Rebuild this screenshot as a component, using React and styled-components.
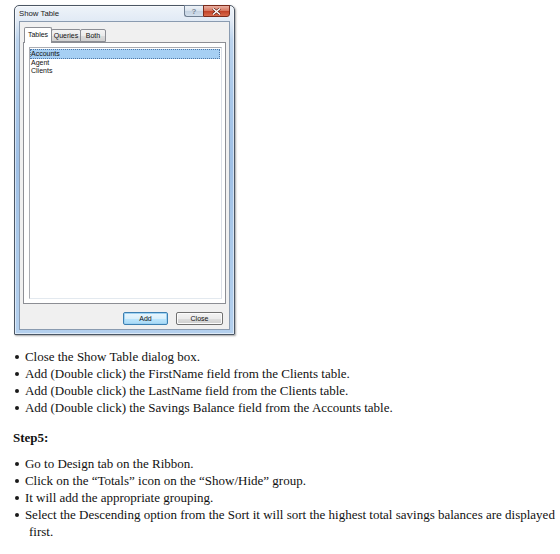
import React from 'react';
import styled, { createGlobalStyle } from 'styled-components';

const GlobalStyle = createGlobalStyle`
  html, body {
    margin: 0;
    padding: 0;
    background: #ffffff;
  }
  body {
    width: 560px;
    height: 554px;
    overflow: hidden;
    font-family: 'Liberation Serif', 'Times New Roman', serif;
    color: #111;
  }
`;

const tables = ['Accounts', 'Agent', 'Clients'];

const tabs = [
  { label: 'Tables', width: 28 },
  { label: 'Queries', width: 30 },
  { label: 'Both', width: 26 },
];

const firstSteps = [
  'Close the Show Table dialog box.',
  'Add (Double click) the FirstName field from the Clients table.',
  'Add (Double click) the LastName field from the Clients table.',
  'Add (Double click) the Savings Balance field from the Accounts table.',
];

const stepFive = [
  'Go to Design tab on the Ribbon.',
  'Click on the \u201cTotals\u201d icon on the \u201cShow/Hide\u201d group.',
  'It will add the appropriate grouping.',
  'Select the Descending option from the Sort it will sort the highest total savings balances are displayed first.',
];

export default function App() {
  return (
    <>
      <GlobalStyle />
      <Page>
        <Dialog>
          <TitleBar>
            <Title>Show Table</Title>
            <CaptionButtons>
              <HelpButton>?</HelpButton>
              <CloseCaption>
                <svg width="9" height="7" viewBox="0 0 9 7">
                  <path
                    d="M1 0.5 L8 6.5 M8 0.5 L1 6.5"
                    stroke="#5a1a10"
                    strokeWidth="2.6"
                  />
                  <path
                    d="M1 0.5 L8 6.5 M8 0.5 L1 6.5"
                    stroke="#ffffff"
                    strokeWidth="1.4"
                  />
                </svg>
              </CloseCaption>
            </CaptionButtons>
          </TitleBar>
          <Client>
            <TabRow>
              {tabs.map((t, i) => (
                <Tab key={t.label} $active={i === 0} $width={t.width}>
                  {t.label}
                </Tab>
              ))}
            </TabRow>
            <TabPanel>
              <ListBox>
                {tables.map((name, i) => (
                  <ListRow key={name} $selected={i === 0}>
                    {name}
                  </ListRow>
                ))}
              </ListBox>
            </TabPanel>
            <ButtonRow>
              <PushButton $default>Add</PushButton>
              <PushButton>Close</PushButton>
            </ButtonRow>
          </Client>
        </Dialog>

        <Steps $top={12.5}>
          {firstSteps.map((s) => (
            <Step key={s}>
              <Bullet />
              {s}
            </Step>
          ))}
        </Steps>

        <StepHeading>Step5:</StepHeading>

        <Steps $top={9}>
          {stepFive.map((s) => (
            <Step key={s}>
              <Bullet />
              {s}
            </Step>
          ))}
        </Steps>
      </Page>
    </>
  );
}

const Page = styled.div`
  padding: 5px 0 0 13px;
`;

const Dialog = styled.div`
  box-sizing: border-box;
  width: 221px;
  height: 330px;
  margin-left: 1px;
  padding: 0 4px 4px 4px;
  display: flex;
  flex-direction: column;
  border: 1px solid #4b5664;
  border-radius: 5px 5px 1px 1px;
  background: linear-gradient(
    180deg,
    #eef3f9 0px,
    #e1eaf5 15px,
    #bcd4ee 34px,
    #a9c8ea 90px,
    #9fc0e6 160px,
    #aac9ea 230px,
    #b4d0ee 100%
  );
  box-shadow: inset 0 0 0 1px rgba(255, 255, 255, 0.55),
    1px 1px 2px rgba(0, 0, 0, 0.35);
  font-family: 'Liberation Sans', Arial, sans-serif;
`;

const TitleBar = styled.div`
  height: 15px;
  display: flex;
  align-items: flex-start;
`;

const Title = styled.div`
  font-size: 7.8px;
  line-height: 15px;
  color: #1b1b1b;
`;

const CaptionButtons = styled.div`
  margin-left: auto;
  margin-top: -1px;
  display: flex;
`;

const HelpButton = styled.div`
  box-sizing: border-box;
  width: 19px;
  height: 12px;
  border: 1px solid #6f7e91;
  border-right: none;
  border-radius: 0 0 0 3px;
  background: linear-gradient(180deg, #eef3f8 0%, #dbe4ee 45%, #c5d3e2 55%, #d3dfec 100%);
  color: #7d8896;
  font-size: 8px;
  font-weight: bold;
  line-height: 11px;
  text-align: center;
`;

const CloseCaption = styled.div`
  box-sizing: border-box;
  width: 27px;
  height: 12px;
  border: 1px solid #7a2a1b;
  border-radius: 0 0 3px 0;
  background: linear-gradient(180deg, #eab0a2 0%, #d97a63 45%, #c2442a 55%, #d96a4c 100%);
  display: flex;
  align-items: center;
  justify-content: center;
`;

const Client = styled.div`
  flex: 1;
  display: flex;
  flex-direction: column;
  padding: 5px 4px 4px 3px;
  border: 1px solid #8a9bb0;
  background: #f0f0f0;
`;

const TabRow = styled.div`
  height: 15px;
  display: flex;
  align-items: flex-end;
  padding-left: 2px;
  position: relative;
  z-index: 1;
`;

const Tab = styled.div`
  box-sizing: border-box;
  width: ${(p) => p.$width}px;
  height: ${(p) => (p.$active ? 16 : 13)}px;
  margin-bottom: ${(p) => (p.$active ? -1 : 0)}px;
  margin-left: -1px;
  border: 1px solid #8c8e94;
  border-bottom: ${(p) => (p.$active ? 'none' : '1px solid #8c8e94')};
  border-radius: 2px 2px 0 0;
  background: ${(p) =>
    p.$active
      ? '#ffffff'
      : 'linear-gradient(180deg, #f3f3f3 0%, #ebebeb 50%, #dddddd 51%, #cfcfcf 100%)'};
  font-size: 7px;
  line-height: ${(p) => (p.$active ? 13 : 11)}px;
  text-align: center;
  color: #111;
`;

const TabPanel = styled.div`
  box-sizing: border-box;
  width: 203px;
  height: 262px;
  padding: 4px 3px 4px 5px;
  border: 1px solid #8c8e94;
  background: #ffffff;
`;

const ListBox = styled.div`
  box-sizing: border-box;
  height: 100%;
  padding: 1px 1px 0 0;
  border: 1px solid #abadb3;
  border-right-color: #dbdfe6;
  border-bottom-color: #e3e9ef;
  background: #ffffff;
`;

const ListRow = styled.div`
  font-size: 7px;
  line-height: 8px;
  padding-left: ${(p) => (p.$selected ? 0 : 1)}px;
  color: #111;
  border: ${(p) => (p.$selected ? '1px dotted #4f79a8' : 'none')};
  background: ${(p) => (p.$selected ? '#a6cff3' : 'transparent')};
`;

const ButtonRow = styled.div`
  display: flex;
  justify-content: flex-end;
  gap: 8px;
  margin-top: 8px;
  padding-right: 2px;
`;

const PushButton = styled.div`
  box-sizing: border-box;
  width: ${(p) => (p.$default ? 45 : 47)}px;
  height: 13px;
  border: 1px solid ${(p) => (p.$default ? '#3c7fb1' : '#707070')};
  border-radius: 2px;
  background: ${(p) =>
    p.$default
      ? 'linear-gradient(180deg, #eaf6fd 0%, #d9f0fc 50%, #bee6fd 51%, #a7d9f5 100%)'
      : 'linear-gradient(180deg, #f2f2f2 0%, #ebebeb 50%, #dddddd 51%, #cfcfcf 100%)'};
  box-shadow: ${(p) => (p.$default ? 'inset 0 0 0 1px #9fd3f3' : 'inset 0 0 0 1px #fbfbfb')};
  font-size: 7px;
  line-height: 11px;
  text-align: center;
  color: #111;
`;

const Steps = styled.ul`
  list-style: none;
  margin: ${(p) => p.$top}px 0 0 0;
  padding: 0;
  font-size: 13px;
  line-height: 17px;
`;

const Step = styled.li`
  padding-left: 16px;
  text-indent: -15px;
`;

/* round list marker, drawn as a small disc ahead of the text */
const Bullet = styled.span`
  display: inline-block;
  width: 4px;
  height: 4px;
  margin: 0 6.4px 1px 0.5px;
  border-radius: 50%;
  background: #1a1a1a;
  vertical-align: middle;
  text-indent: 0;
`;

const StepHeading = styled.div`
  margin-top: 13px;
  font-size: 13px;
  line-height: 17px;
  font-weight: bold;
`;
